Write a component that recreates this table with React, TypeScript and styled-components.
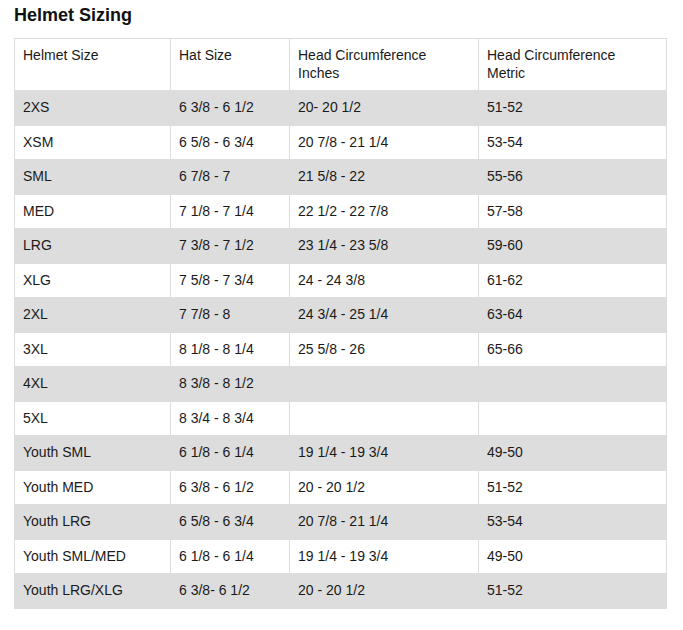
import React from "react";
import styled, { createGlobalStyle } from "styled-components";

const GlobalStyle = createGlobalStyle`
  html, body { margin: 0; padding: 0; background: #fff; }
  body { font-family: "Liberation Sans", Arial, sans-serif; color: #222; }
`;

const Page = styled.div`
  display: flex;
  flex-direction: column;
  gap: 12px;
  padding: 5px 0 0 14px;
`;

const Title = styled.h2`
  margin: 0;
  font-size: 18px;
  font-weight: bold;
  line-height: 21px;
  color: #111;
`;

const Table = styled.table`
  width: 652px;
  border-collapse: collapse;
  table-layout: fixed;
  border: 1px solid #ddd;
  font-size: 14px;
  line-height: 17.5px;
`;

const Row = styled.tr<{ $shade?: boolean }>`
  background: ${(p) => (p.$shade ? "#ddd" : "#fff")};
`;

const HeadCell = styled.th<{ $w: number }>`
  box-sizing: border-box;
  width: ${(p) => p.$w}px;
  text-align: left;
  font-weight: normal;
  vertical-align: top;
  padding: 8px 8px;
  border: 1px solid #ddd;
  color: #1a1a1a;
`;

const Cell = styled.td`
  text-align: left;
  vertical-align: top;
  padding: 8px 8px;
  border: 1px solid #ddd;
  color: #1a1a1a;
`;

const widths = [156, 119, 189, 188];
const headers = [
  "Helmet Size",
  "Hat Size",
  <>Head Circumference<br />Inches</>,
  <>Head Circumference<br />Metric</>,
];

const rows: string[][] = [
  ["2XS", "6 3/8 - 6 1/2", "20- 20 1/2", "51-52"],
  ["XSM", "6 5/8 - 6 3/4", "20 7/8 - 21 1/4", "53-54"],
  ["SML", "6 7/8 - 7", "21 5/8 - 22", "55-56"],
  ["MED", "7 1/8 - 7 1/4", "22 1/2 - 22 7/8", "57-58"],
  ["LRG", "7 3/8 - 7 1/2", "23 1/4 - 23 5/8", "59-60"],
  ["XLG", "7 5/8 - 7 3/4", "24 - 24 3/8", "61-62"],
  ["2XL", "7 7/8 - 8", "24 3/4 - 25 1/4", "63-64"],
  ["3XL", "8 1/8 - 8 1/4", "25 5/8 - 26", "65-66"],
  ["4XL", "8 3/8 - 8 1/2", "", ""],
  ["5XL", "8 3/4 - 8 3/4", "", ""],
  ["Youth SML", "6 1/8 - 6 1/4", "19 1/4 - 19 3/4", "49-50"],
  ["Youth MED", "6 3/8 - 6 1/2", "20 - 20 1/2", "51-52"],
  ["Youth LRG", "6 5/8 - 6 3/4", "20 7/8 - 21 1/4", "53-54"],
  ["Youth SML/MED", "6 1/8 - 6 1/4", "19 1/4 - 19 3/4", "49-50"],
  ["Youth LRG/XLG", "6 3/8- 6 1/2", "20 - 20 1/2", "51-52"],
];

export default function App() {
  return (
    <>
      <GlobalStyle />
      <Page>
        <Title>Helmet Sizing</Title>
        <Table>
          <thead>
            <Row>
              {headers.map((h, i) => (
                <HeadCell key={i} $w={widths[i]}>{h}</HeadCell>
              ))}
            </Row>
          </thead>
          <tbody>
            {rows.map((r, i) => (
              <Row key={i} $shade={i % 2 === 0}>
                {r.map((c, j) => (
                  <Cell key={j}>{c}</Cell>
                ))}
              </Row>
            ))}
          </tbody>
        </Table>
      </Page>
    </>
  );
}
